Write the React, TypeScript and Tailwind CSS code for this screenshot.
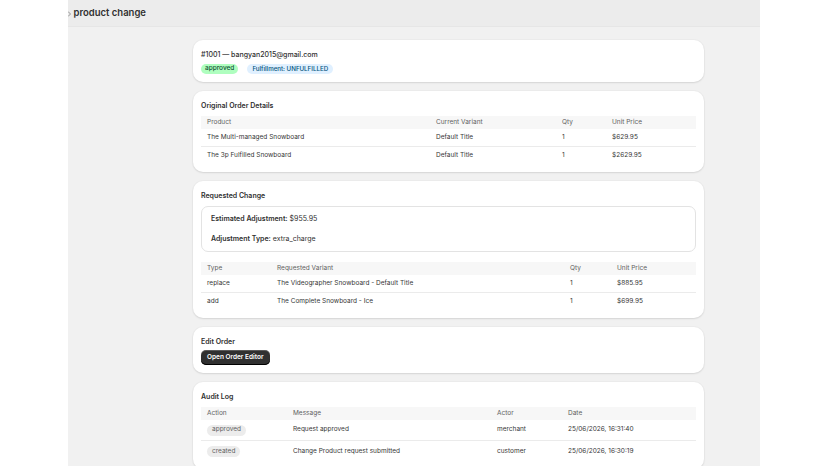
import React from "react";

const font = { fontFamily: "Inter, 'Noto Sans', sans-serif" };

type Col = { label: string };

function Card({
  title,
  children,
  pad = "pt-[10px] pb-[7px]",
  titleGap = "mb-[5px]",
}: {
  title?: string;
  children: React.ReactNode;
  pad?: string;
  titleGap?: string;
}) {
  return (
    <div className={`rounded-[10px] bg-white px-[8px] ${pad} shadow-[0_1px_2px_rgba(0,0,0,0.10),0_0_0_1px_rgba(0,0,0,0.02)]`}>
      {title && (
        <h2 className={`${titleGap} h-[10px] text-[7px] leading-[10px] font-semibold text-[#303030]`}>{title}</h2>
      )}
      {children}
    </div>
  );
}

function DataTable({
  cols,
  widths,
  rows,
  rowH,
}: {
  cols: Col[];
  widths: string;
  rows: React.ReactNode[][];
  rowH: string;
}) {
  return (
    <div className="w-full text-[6.5px]">
      <div className={`grid ${widths} h-[13px] items-center bg-[#f7f7f7] text-[#616161]`}>
        {cols.map((c) => (
          <div key={c.label} className="px-[6px]">
            {c.label}
          </div>
        ))}
      </div>
      {rows.map((r, i) => (
        <div
          key={i}
          className={`grid ${widths} ${rowH} items-center text-[#363636] ${
            i < rows.length - 1 ? "border-b border-[#ebebeb]" : ""
          }`}
        >
          {r.map((cell, j) => (
            <div key={j} className="px-[6px]">
              {cell}
            </div>
          ))}
        </div>
      ))}
    </div>
  );
}

function Pill({ children }: { children: React.ReactNode }) {
  return (
    <span className="inline-flex h-[11px] items-center rounded-full bg-[#ececec] px-[5px] text-[6.5px] text-[#616161]">
      {children}
    </span>
  );
}

export default function App() {
  return (
    <div className="flex h-[466px] w-[828px] overflow-hidden bg-white" style={font}>
      <div className="w-[68px] shrink-0 bg-white" />
      <div className="flex w-[692px] shrink-0 flex-col bg-[#f1f1f1]">
        <div className="flex h-[27px] shrink-0 items-center gap-[3px] border-b border-[#e6e6e6] bg-[#ececec] pt-[1px]">
          <svg width="3" height="6" viewBox="0 0 3 6" className="ml-[-0.5px]">
            <path d="M0 0.5 L2.5 3 L0 5.5" fill="none" stroke="#8a8a8a" strokeWidth="0.9" />
          </svg>
          <h1 className="text-[9.5px] font-semibold text-[#303030]">product change</h1>
        </div>

        <div className="flex flex-col gap-[9px] pt-[13px] pl-[125px] pr-[56px]">
          <Card pad="pt-[10px] pb-[8px]">
            <div className="h-[10px] text-[7px] leading-[10px] font-medium text-[#303030]">
              #1001 — bangyan2015@gmail.com
            </div>
            <div className="mt-[4px] flex gap-[9px]">
              <span className="inline-flex h-[10px] items-center rounded-full bg-[#affebf] px-[4px] text-[6.5px] font-medium text-[#0c5132]">
                approved
              </span>
              <span className="inline-flex h-[10px] items-center rounded-full bg-[#e0f0ff] px-[5px] text-[6.2px] font-medium text-[#00527c]">
                Fulfillment: UNFULFILLED
              </span>
            </div>
          </Card>

          <Card title="Original Order Details">
            <DataTable
              widths="grid-cols-[229px_126px_50px_90px]"
              rowH="h-[18px]"
              cols={[{ label: "Product" }, { label: "Current Variant" }, { label: "Qty" }, { label: "Unit Price" }]}
              rows={[
                ["The Multi-managed Snowboard", "Default Title", "1", "$629.95"],
                ["The 3p Fulfilled Snowboard", "Default Title", "1", "$2629.95"],
              ]}
            />
          </Card>

          <Card title="Requested Change">
            <div className="flex flex-col gap-[10px] rounded-[7px] border border-[#e3e3e3] px-[9px] py-[7px] text-[7px] leading-[10px] text-[#303030]">
              <p>
                <span className="font-semibold">Estimated Adjustment:</span> $955.95
              </p>
              <p>
                <span className="font-semibold">Adjustment Type:</span> extra_charge
              </p>
            </div>
            <div className="mt-[10px]">
              <DataTable
                widths="grid-cols-[70px_293px_47px_85px]"
                rowH="h-[18px]"
                cols={[{ label: "Type" }, { label: "Requested Variant" }, { label: "Qty" }, { label: "Unit Price" }]}
                rows={[
                  ["replace", "The Videographer Snowboard - Default Title", "1", "$885.95"],
                  ["add", "The Complete Snowboard - Ice", "1", "$699.95"],
                ]}
              />
            </div>
          </Card>

          <Card title="Edit Order" pad="pt-[10px] pb-[8px]" titleGap="mb-[3px]">
            <button className="flex h-[15px] items-center rounded-[5px] bg-[#303030] px-[6px] text-[6.5px] font-semibold text-white shadow-[inset_0_-1px_0_#000,inset_0_1px_0_rgba(255,255,255,0.2)]">
              Open Order Editor
            </button>
          </Card>

          <Card title="Audit Log" pad="pt-[10px] pb-[7px]" titleGap="mb-[5px]">
            <DataTable
              widths="grid-cols-[86px_204px_71px_134px]"
              rowH="h-[21px]"
              cols={[{ label: "Action" }, { label: "Message" }, { label: "Actor" }, { label: "Date" }]}
              rows={[
                [<Pill>approved</Pill>, "Request approved", "merchant", "25/06/2026, 16:31:40"],
                [<Pill>created</Pill>, "Change Product request submitted", "customer", "25/06/2026, 16:30:19"],
              ]}
            />
          </Card>
        </div>
      </div>
      <div className="w-[68px] shrink-0 bg-white" />
    </div>
  );
}
